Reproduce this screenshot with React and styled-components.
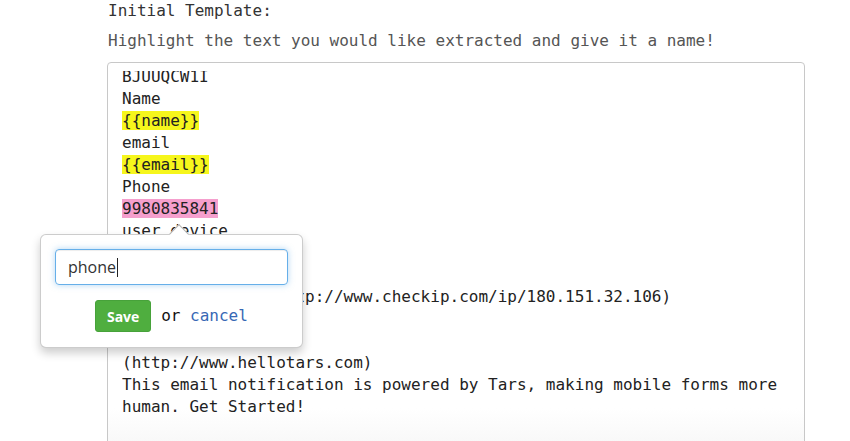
import React from 'react';
import styled, { createGlobalStyle } from 'styled-components';

const GlobalStyle = createGlobalStyle`
  html, body {
    margin: 0;
    padding: 0;
    background: #fff;
  }
  body {
    font-family: "DejaVu Sans Mono", monospace;
    color: #333;
  }
`;

const lines = [
    { text: 'BJUUQCW1I' },
    { text: 'Name' },
    { text: '{{name}}', mark: 'yellow' },
    { text: 'email' },
    { text: '{{email}}', mark: 'yellow' },
    { text: 'Phone' },
    { text: '9980835841', mark: 'pink' },
    { text: 'user device' },
    { text: 'Mac OS X' },
    { text: 'ip' },
    { text: '180.151.32.106 (http://www.checkip.com/ip/180.151.32.106)' },
    { text: '' },
    { text: 'Tars' },
    { text: '(http://www.hellotars.com)' },
    { text: 'This email notification is powered by Tars, making mobile forms more human. Get Started!' },
];

const App = () => {
    return (
        <>
            <GlobalStyle />
            <Page>
                <Label>Initial Template:</Label>
                <Hint>Highlight the text you would like extracted and give it a name!</Hint>
                <TemplateBox>
                    <Scroller>
                        <TemplateText>
                            {lines.map((line, i) => (
                                <Line key={i}>
                                    {line.mark ? <Mark $color={line.mark}>{line.text}</Mark> : (line.text || '\u00a0')}
                                </Line>
                            ))}
                        </TemplateText>
                    </Scroller>
                </TemplateBox>

                <Popover>
                    <Field>
                        phone<Caret />
                    </Field>
                    <Actions>
                        <SaveButton>Save</SaveButton>
                        <span>or <CancelLink>cancel</CancelLink></span>
                    </Actions>
                </Popover>
            </Page>
        </>
    )
}

const Page = styled.div`
position: relative;
height: 441px;
overflow: hidden;
padding-left: 107px;
font-size: 16px;
line-height: 22px;
`;

const Label = styled.div`
color: #333;
padding-left: 1px;
`;

const Hint = styled.div`
color: #555;
margin-top: 8px;
padding-left: 1px;
`;

const TemplateBox = styled.div`
margin-top: 10px;
width: 667px;
height: 420px;
border: 1px solid #c8c8c8;
border-radius: 4px;
padding: 8px 15px 0 14px;
background: linear-gradient(to bottom, #fff 0, #fff 345px, #f4f4f4 400px);
`;

const Scroller = styled.div`
height: 100%;
overflow: hidden;
`;

const TemplateText = styled.div`
margin-top: -5px;
color: #222;
white-space: pre-wrap;
`;

const Line = styled.div`
min-height: 22px;
`;

const Mark = styled.span`
background: ${p => p.$color === 'pink' ? '#f59fcd' : '#f6f61c'};
`;

const Popover = styled.div`
position: absolute;
left: 40px;
top: 234px;
width: 233px;
padding: 14px 14px 15px 14px;
background: #fff;
border: 1px solid rgba(0, 0, 0, 0.2);
border-radius: 6px;
box-shadow: 0 5px 10px rgba(0, 0, 0, 0.2);
&::before {
    content: '';
    position: absolute;
    left: 131px;
    top: -8px;
    width: 13px;
    height: 13px;
    background: #fff;
    border-top: 1px solid #b4b4b4;
    border-left: 1px solid #b4b4b4;
    transform: rotate(45deg);
}
`;

const Field = styled.div`
box-sizing: border-box;
height: 36px;
padding: 0 12px;
display: flex;
align-items: center;
border: 1px solid #66afe9;
border-radius: 4px;
box-shadow: inset 0 1px 1px rgba(0, 0, 0, 0.075), 0 0 6px rgba(102, 175, 233, 0.5);
font-family: "Open Sans", "Liberation Sans", sans-serif;
font-size: 16px;
color: #333;
`;

const Caret = styled.span`
display: inline-block;
width: 1px;
height: 19px;
background: #222;
margin-left: 1px;
`;

const Actions = styled.div`
display: flex;
justify-content: center;
align-items: center;
gap: 10px;
margin-top: 15px;
color: #111;
`;

const SaveButton = styled.button`
width: 56px;
height: 32px;
border: 1px solid #47a23a;
border-radius: 3px;
background: #4fae3f;
color: #fff;
font-family: "Open Sans", "Liberation Sans", sans-serif;
font-weight: 700;
font-size: 14px;
padding: 0;
cursor: pointer;
`;

const CancelLink = styled.a`
color: #3768b5;
cursor: pointer;
`;

export default App
